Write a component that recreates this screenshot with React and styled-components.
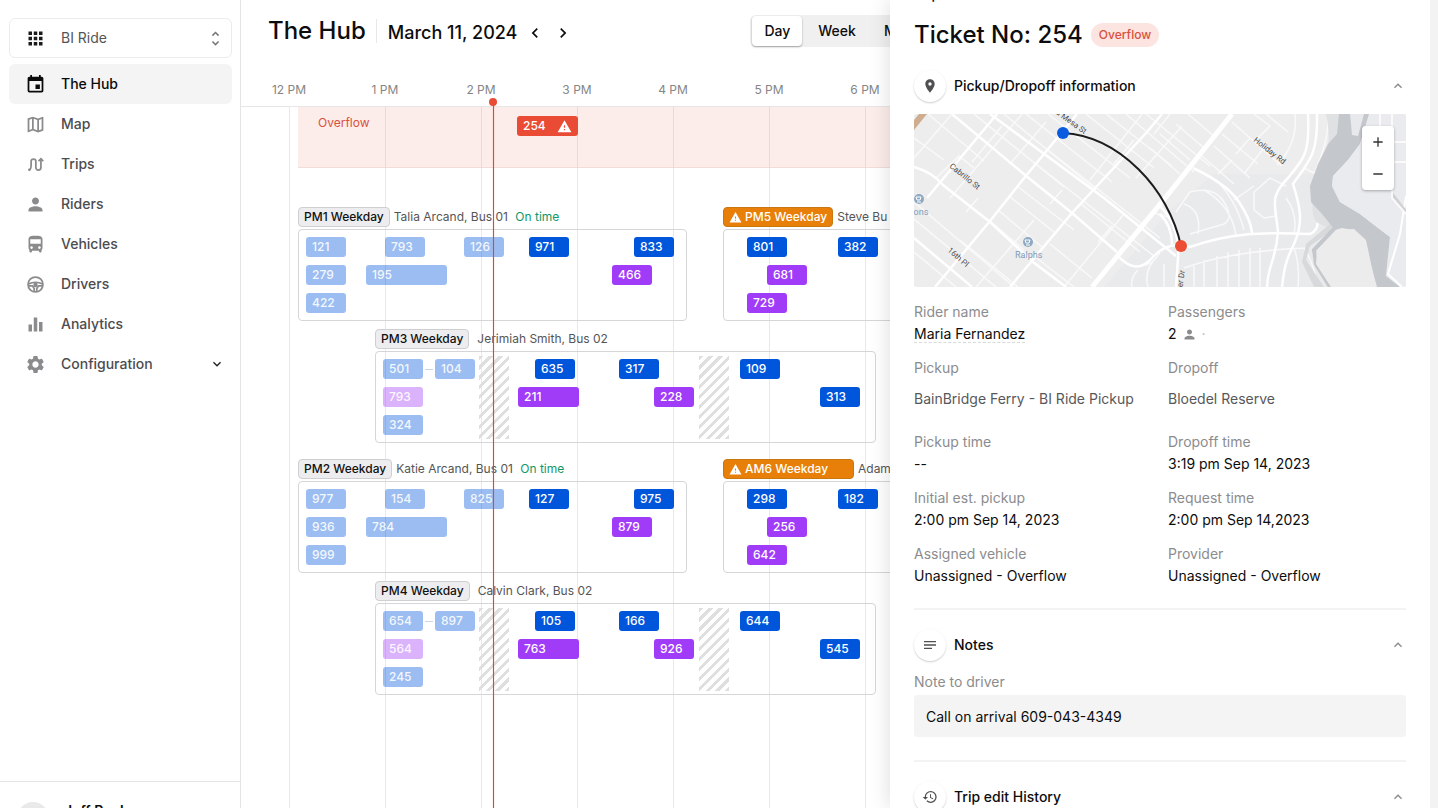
import React from "react";
import styled, { createGlobalStyle, css } from "styled-components";
import {
  MdAdd,
  MdApps,
  MdChevronLeft,
  MdChevronRight,
  MdDirectionsBus,
  MdEqualizer,
  MdEvent,
  MdExpandLess,
  MdExpandMore,
  MdHistory,
  MdNotes,
  MdOutlineMap,
  MdPerson,
  MdPlace,
  MdRemove,
  MdSettings,
  MdUnfoldMore,
  MdWarning,
} from "react-icons/md";

const GlobalStyle = createGlobalStyle`
  *, *::before, *::after { box-sizing: border-box; }
  body {
    margin: 0;
    background: #fff;
    color: #0d0d0d;
    font-family: Inter, "Liberation Sans", sans-serif;
    font-size: 14px;
    line-height: 22px;
  }
  button, select, input {
    margin: 0;
    padding: 0;
    border: 0;
    background: none;
    font: inherit;
    color: inherit;
  }
  button { cursor: pointer; }
  a { color: inherit; text-decoration: none; }
  h1, h2, p, dl, dd, dt { margin: 0; font-weight: inherit; font-size: inherit; }
  svg { display: block; flex: none; }
`;

/* ---------- Shell ---------- */

const Shell = styled.div`
  position: relative;
  display: flex;
  height: 100vh;
  overflow: hidden;
`;

const Sidebar = styled.aside`
  flex: none;
  display: flex;
  flex-direction: column;
  width: 241px;
  border-right: 1px solid #e4e4e4;
`;

const SidebarTop = styled.div`
  flex: 1;
  min-height: 0;
  padding: 18px 8px 0 9px;
`;

const Workspace = styled.label`
  display: flex;
  align-items: center;
  gap: 15px;
  height: 40px;
  margin-bottom: 6px;
  padding: 0 6px 0 15px;
  border: 1px solid #ececee;
  border-radius: 6px;
  color: #1a1a1a;
`;

const WorkspaceSelect = styled.select`
  flex: 1;
  min-width: 0;
  appearance: none;
  outline: 0;
  color: #555;
`;

const NavLink = styled.a`
  display: flex;
  align-items: center;
  gap: 15px;
  height: 40px;
  padding: 0 7px 0 16px;
  border-radius: 6px;
  font-weight: 500;
  color: ${(p) => (p.$active ? "#0a0a0a" : "#4c4c4f")};
  background: ${(p) => (p.$active ? "#f4f4f5" : "transparent")};
  svg { color: ${(p) => (p.$active ? "#0a0a0a" : "#8b8b8d")}; }
`;

const NavText = styled.span`
  flex: 1;
`;

const Disclosure = styled.span`
  svg { color: #222; }
`;

const Account = styled.div`
  flex: none;
  display: flex;
  gap: 15px;
  height: 70px;
  margin-bottom: -43px;
  padding: 18px 17px 0;
  border-top: 1px solid #e4e4e4;
  font-weight: 600;
`;

const Avatar = styled.span`
  width: 32px;
  height: 32px;
  margin-top: 2px;
  border-radius: 50%;
  background: #e9e9ea;
`;

/* ---------- Hub header ---------- */

const Main = styled.main`
  flex: 1;
  min-width: 0;
  display: flex;
  flex-direction: column;
  overflow: hidden;
`;

const HubHeader = styled.header`
  flex: none;
  display: flex;
  align-items: center;
  height: 62px;
  padding-left: 27px;
  white-space: nowrap;
`;

const HubTitle = styled.h1`
  font-size: 24px;
  line-height: 32px;
  font-weight: 500;
`;

const DateNav = styled.div`
  display: flex;
  align-items: center;
  height: 24px;
  margin-left: 10px;
  padding: 4px 0 0 11px;
  border-left: 1px solid #e8e8e8;
  font-size: 18px;
  font-weight: 500;
`;

const ArrowButton = styled.button`
  display: grid;
  place-items: center;
  width: 28px;
  height: 24px;
  &:first-of-type { margin-left: 4px; }
`;

const RangeSwitch = styled.div`
  display: flex;
  flex: none;
  height: 32px;
  margin-left: 173px;
  padding: 1px 2px;
  border-radius: 6px;
  background: #f0f0f0;
`;

const RangeButton = styled.button`
  padding: 0 12px 0 16px;
  border-radius: 4px;
  font-weight: 500;
  ${(p) =>
    p.$on &&
    css`
      padding: 0 12px;
      background: #fff;
      box-shadow: 0 1px 2px rgba(0, 0, 0, 0.35);
    `}
`;

/* ---------- Timeline ---------- */

const HOUR = 96;

const Hours = styled.div`
  flex: none;
  display: flex;
  height: 45px;
  padding-top: 17px;
  border-bottom: 1px solid #e6e6e6;
  font-size: 12px;
  color: #858585;
`;

const Hour = styled.span`
  flex: none;
  width: ${HOUR}px;
  text-align: center;
`;

const Board = styled.div`
  position: relative;
  flex: 1;
  margin-left: 48px;
  background: repeating-linear-gradient(90deg, #e9e9ea 0 1px, transparent 1px ${HOUR}px);
`;

const NowLine = styled.div`
  position: absolute;
  top: -5px;
  bottom: 0;
  width: 1px;
  background: #dc4a2c;
  box-shadow: 0 0 1px #e8735c;
  &::before {
    content: "";
    position: absolute;
    left: -4px;
    top: -4px;
    width: 8px;
    height: 8px;
    border-radius: 50%;
    background: #e94b35;
  }
`;

const OverflowBand = styled.div`
  display: flex;
  height: 61px;
  margin: 0 0 39px 9px;
  padding-top: 9px;
  background: rgba(234, 75, 53, 0.1);
  border-bottom: 1px solid #f2dcd8;
`;

const OverflowLabel = styled.span`
  flex: none;
  width: 219px;
  padding-left: 20px;
  font-size: 12px;
  line-height: 14px;
  color: #d9503d;
`;

const ShiftRow = styled.div`
  display: flex;
  margin-bottom: ${(p) => (p.$last ? 16 : 8)}px;
`;

const ShiftBlock = styled.section`
  flex: none;
  display: flex;
  flex-direction: column;
  gap: 2px;
`;

const ShiftHead = styled.header`
  display: flex;
  align-items: center;
  gap: ${(p) => p.$gap}px;
  height: 20px;
  font-size: 12px;
  white-space: nowrap;
  color: #555;
`;

const ShiftTag = styled.h2`
  display: flex;
  align-items: center;
  gap: 3px;
  height: 20px;
  min-width: ${(p) => (p.$wide ? 131 : 0)}px;
  padding: 0 5px;
  border: 1px solid ${(p) => (p.$warn ? "#c9780f" : "#cfcfd2")};
  border-radius: 4px;
  font-weight: 500;
  color: ${(p) => (p.$warn ? "#fff" : "#111")};
  background: ${(p) => (p.$warn ? "#e77f08" : "#ededef")};
`;

const OnTime = styled.span`
  margin-left: 4px;
  color: #109868;
`;

const ShiftBox = styled.div`
  position: relative;
  display: flex;
  flex-direction: column;
  gap: 8px;
  padding: 7px 0;
  border: 1px solid #d6d6d8;
  border-radius: 4px;
`;

const Lane = styled.div`
  display: flex;
  align-items: center;
  height: 20px;
`;

const chipColors = {
  done: ["rgba(0, 86, 219, 0.39)", "rgba(255, 255, 255, 0.9)"],
  next: ["#0056db", "#fff"],
  return: ["#a03cf8", "#fff"],
  returnDone: ["rgba(160, 60, 248, 0.39)", "rgba(255, 255, 255, 0.9)"],
  overflow: ["#e94b35", "#fff"],
};

const Chip = styled.button`
  flex: none;
  display: flex;
  align-items: center;
  justify-content: space-between;
  height: 20px;
  padding: 0 6px;
  border-radius: 3px;
  font-size: 12px;
  line-height: 20px;
  font-weight: 500;
  background: ${(p) => chipColors[p.$kind][0]};
  color: ${(p) => chipColors[p.$kind][1]};
`;

const Connector = styled.span`
  flex: none;
  height: 1px;
  background: #c9d6ea;
`;

const Break = styled.div`
  position: absolute;
  top: 4px;
  bottom: 3px;
  background: repeating-linear-gradient(135deg, #dfdfe0 0 3px, transparent 3px 7px);
`;

/* ---------- Ticket drawer ---------- */

const Drawer = styled.aside`
  position: absolute;
  top: 0;
  right: 0;
  bottom: 0;
  width: 548px;
  padding: 0 24px;
  overflow: hidden;
  background: #fff;
  border-right: 8px solid #f3f3f3;
  box-shadow: 0 0 20px rgba(0, 0, 0, 0.14);
`;

const BackLink = styled.a`
  display: block;
  margin-top: -14px;
  line-height: 16px;
  font-weight: 500;
`;

const TicketHead = styled.header`
  display: flex;
  align-items: center;
  gap: 8px;
  height: 32px;
  margin: 17px 0 19px;
`;

const TicketTitle = styled.h2`
  font-size: 24px;
  line-height: 32px;
  font-weight: 500;
`;

const Pill = styled.span`
  padding: 0 8px;
  border-radius: 12px;
  font-size: 12px;
  line-height: 24px;
  font-weight: 500;
  color: #d9503d;
  background: #fce4e1;
`;

const SectionToggle = styled.button`
  display: flex;
  align-items: center;
  gap: 8px;
  width: 100%;
  height: 32px;
  text-align: left;
  font-weight: 500;
  svg { color: #8b8b8d; }
`;

const SectionIcon = styled.span`
  display: grid;
  place-items: center;
  width: 32px;
  height: 32px;
  border-radius: 50%;
  box-shadow: 0 1px 2px rgba(0, 0, 0, 0.2);
  svg { color: #505052; }
`;

const SectionTitle = styled.span`
  flex: 1;
`;

const MapFrame = styled.div`
  position: relative;
  height: 173px;
  margin: 12px 0 14px;
  overflow: hidden;
  border-radius: 3px;
  background: #ededee;
  svg.streets { width: 100%; height: 100%; }
`;

const ZoomControl = styled.div`
  position: absolute;
  top: 12px;
  right: 12px;
  display: grid;
  border-radius: 4px;
  background: #fff;
  box-shadow: 0 1px 3px rgba(0, 0, 0, 0.3);
`;

const ZoomButton = styled.button`
  display: grid;
  place-items: center;
  width: 32px;
  height: 32px;
  color: #333;
`;

const Details = styled.dl`
  display: grid;
  grid-template-columns: 254px 1fr;
  row-gap: 12px;
  margin-bottom: 21px;
`;

const Term = styled.dt`
  color: #8c8c8e;
`;

const Value = styled.dd`
  display: flex;
  align-items: center;
  gap: 5px;
  height: ${(p) => (p.$tall ? 40 : 22)}px;
  color: ${(p) => (p.$tall ? "#58585a" : "#0d0d0d")};
  svg { color: #8b8b8d; }
`;

const RiderLink = styled.a`
  line-height: 17px;
  border-bottom: 1px dashed #dadada;
`;

const Dot = styled.span`
  color: #b5b5b7;
`;

const Divider = styled.hr`
  height: 2px;
  margin: 0 0 19px;
  border: 0;
  background: #f3f3f3;
`;

const NoteField = styled.label`
  display: grid;
  gap: 2px;
  margin: 10px 0 23px;
  color: #8c8c8e;
`;

const NoteInput = styled.input`
  width: 100%;
  height: 42px;
  padding: 0 12px;
  border-radius: 4px;
  outline: 0;
  color: #0d0d0d;
  background: #f4f4f4;
`;

/* ---------- Drawings ---------- */

function TripsIcon({ size }) {
  return (
    <svg width={size} height={size} viewBox="0 0 24 24" fill="none" stroke="currentColor" strokeWidth="2">
      <path d="M4.500 18C7 18 7 15 7 12.500V8.500a2.700 2.700 0 0 1 5.400 0V15.500a2.900 2.900 0 0 0 5.800 0V6" />
      <path d="M15.500 8.200l2.700-2.700 2.700 2.700" />
      <circle cx="5" cy="18" r="1.500" fill="currentColor" stroke="none" />
    </svg>
  );
}

function WheelIcon({ size }) {
  return (
    <svg width={size} height={size} viewBox="0 0 24 24" fill="none" stroke="currentColor" strokeWidth="2">
      <circle cx="12" cy="12" r="8.500" />
      <path d="M4 11.300C9 9.200 15 9.200 20 11.300" />
      <path d="M4 13.500h4.500l2 3V20M20 13.500h-4.500l-2 3V20" />
      <circle cx="12" cy="12.500" r="1.500" fill="currentColor" />
    </svg>
  );
}

function StreetMap() {
  return (
    <svg className="streets" viewBox="0 0 492 173" preserveAspectRatio="xMidYMid slice" role="img" aria-label="Route map">
      <rect width="492" height="173" fill="#ededee" />
      <path d="M190 173L256 96 300 60 420 60V173Z" fill="#e9eaec" />
      <path d="M0 6L5 0H13L0 16Z" fill="#cfae90" />
      <g fill="none" stroke="#f9f9fa" strokeWidth="1.500">
        <path d="M0 88L80 156 100 173M0 105L82 173M0 138L42 173M0 24L30 46M14 0L70 47M22 64L45 42 60 54M60 0L150 73M90 0L182 76M112 0L198 68M134 0L216 64M172 0L240 54M192 0L258 52M212 0L280 58M232 0L296 52" />
        <path d="M95 82L140 118M84 96L128 133M76 107L110 136M103 72L160 116M122 50L240 142M134 36L246 124M166 89L226 138M62 173L120 106M136 130L178 164M120 142L160 173M46 126L104 173" />
        <path d="M0 44L38 0M36 84L108 0M52 98L64 84M150 173L210 100M222 64L268 12M176 66L228 0M256 0L240 20M200 50L220 26M184 128L198 112M136 90L148 76M58 48L88 12M96 50L132 8" />
        <path d="M236 34L266 60M246 20L276 46M262 10L290 34M274 0L302 24M318 8L368 52M308 20L344 50M300 32L336 64M288 42L320 70M330 60L350 34 336 24 322 40M340 0L356 12 344 24M352 0L374 18M318 46L304 60" />
        <path d="M262 98L276 78Q300 72 310 88T310 110L276 120M270 90Q288 96 284 120M290 76Q318 92 322 122M302 66Q322 86 330 116M340 78L356 64 372 72M340 78V96L350 104 362 102M320 86L340 72" />
        <path d="M303 142V173M314 138V173M325 136V173M336 134V173M346 134V173M280 150V173M290 146V173M270 154Q320 136 396 134M380 134Q386 150 384 173M390 134Q400 150 404 173M372 84Q384 100 380 120M381 0Q384 30 363 51M414 0Q416 24 400 60M390 54L402 60" />
        <path d="M204 142Q216 154 228 152T246 138M224 156Q216 164 218 173M240 146Q230 158 234 173M250 150V173M258 104L236 98" />
      </g>
      <g fill="none" stroke="#fff" strokeWidth="2.500">
        <path d="M21 173L76 107 111 63 163 0M96 173L158 99 233 18 248 0M13 84L83 0" />
        <path d="M0 53Q18 58 29 71L76 108 119 148 152 173M38 0L111 61 158 99 203 138M76 0L190 84 262 142M0 124L58 173" />
        <path d="M204 142Q222 162 238 144T276 133C316 119 346 118 396 120Q406 116 403 102" />
        <path d="M394 0C396 40 390 44 374 64 354 84 362 92 364 118 362 146 354 150 353 173" />
        <path d="M403 0C404 40 396 46 379 70 386 92 390 108 380 130 370 150 370 158 368 173" />
        <path d="M279 54Q313 70 325 88T338 119M246 92Q266 112 264 144L262 173M246 100Q258 112 258 130" />
      </g>
      <path d="M178 173L256 78 318 0" fill="none" stroke="#fff" strokeWidth="5" />
      <path d="M412 0Q420 34 404 62 394 96 402 108L410 112 424 118 414 92V58L430 26V0Z" fill="#e0e1e3" />
      <path d="M424 112L396 132 392 146 410 173H400L388 148 392 130 416 110Z" fill="#d7d9db" />
      <path d="M425 0H455L446 30 434 46 419 62 418 72 426 88 446 100 464 114 476 123 474 142 472 162 486 173H463L456 148 446 125 438 116 428 114 421 116 408 100 397 88 396 72 404 50 414 30 423 20Z" fill="#c4c7cb" />
      <path d="M436 0L438 21 444 22 450 0Z" fill="#e7e9ec" />
      <path d="M446 30L456 0H492V173H486L474 162 476 123 446 100 426 88 418 72 419 62 434 46Z" fill="#e9ebef" />
      <path d="M421 114L400 136 402 150 416 173" fill="none" stroke="#c4c7cb" strokeWidth="4" />
      <path d="M422 116L440 115 452 126 462 173H417L402 150 403 136Z" fill="#ececed" />
      <path d="M492 82L486 120 474 160 488 173" fill="none" stroke="#fff" strokeWidth="2" />
      <path d="M478 80L492 98" fill="none" stroke="#cfd1d4" strokeWidth="3" />
      <path d="M478 0V84L492 100M466 0V12M478 28H492M478 48H492" fill="none" stroke="#fafafa" strokeWidth="2" />
      <g fontFamily="Roboto, sans-serif" fontSize="8" fill="#4a4a4c">
        <text transform="translate(35 53) rotate(39)">Cabrillo St</text>
        <text transform="translate(33 137) rotate(41)">16th Pl</text>
        <text transform="translate(138 -3) rotate(36)">La Mesa St</text>
        <text transform="translate(339 27) rotate(38)">Holiday Rd</text>
        <text transform="translate(267 184) rotate(-82)">River Dr</text>
      </g>
      <g fontFamily="Roboto, sans-serif" fontSize="9" fill="#7f9cb8">
        <text x="101" y="144">Ralphs</text>
        <text x="-6" y="101">Vons</text>
      </g>
      {[[5, 85], [114, 128]].map(([x, y]) => (
        <g key={x} transform={`translate(${x} ${y})`}>
          <circle r="5" fill="#8fa9c2" />
          <path d="M-3 -2H2L1 1H-2ZM-2 3H2" fill="none" stroke="#fff" />
        </g>
      ))}
      <path d="M149 19C205 22 255 75 267 132" fill="none" stroke="#1c1c1c" strokeWidth="2" />
      <circle cx="149" cy="19" r="6" fill="#0a5be0" />
      <circle cx="267" cy="132" r="6" fill="#ec4d34" />
    </svg>
  );
}

/* ---------- Data: positions are pixels on the time axis, 96 per hour from 12 PM ---------- */

const navItems = [
  { label: "The Hub", icon: MdEvent, active: true },
  { label: "Map", icon: MdOutlineMap },
  { label: "Trips", icon: TripsIcon },
  { label: "Riders", icon: MdPerson },
  { label: "Vehicles", icon: MdDirectionsBus },
  { label: "Drivers", icon: WheelIcon },
  { label: "Analytics", icon: MdEqualizer },
  { label: "Configuration", icon: MdSettings, expandable: true },
];

const hours = ["12 PM", "1 PM", "2 PM", "3 PM", "4 PM", "5 PM", "6 PM"];

const trip = (id, start, kind = "next", length = 40) => ({ id, start, kind, length });

const weekday = (name, driver, ids) => ({
  name,
  driver,
  onTime: true,
  gap: 4,
  start: 9,
  length: 389,
  lanes: [
    [trip(ids[0], 17, "done"), trip(ids[1], 96, "done"), trip(ids[2], 175, "done"), trip(ids[3], 240), trip(ids[4], 345)],
    [trip(ids[5], 17, "done"), trip(ids[6], 77, "done", 81), trip(ids[7], 323, "return")],
    [trip(ids[8], 17, "done")],
  ],
});

const delayed = (name, driver, ids, wide) => ({
  name,
  driver,
  wide,
  warn: true,
  gap: 4,
  start: 434,
  length: 389,
  lanes: [
    [trip(ids[0], 458), trip(ids[1], 549)],
    [trip(ids[2], 478, "return")],
    [trip(ids[3], 458, "return")],
  ],
});

const withBreaks = (name, driver, ids) => ({
  name,
  driver,
  gap: 8,
  start: 86,
  length: 501,
  breaks: [{ start: 190, length: 30 }, { start: 410, length: 30 }],
  lanes: [
    [
      trip(ids[0], 94, "done"),
      { link: true, start: 136, length: 8 },
      trip(ids[1], 146, "done"),
      trip(ids[2], 246),
      trip(ids[3], 330),
      trip(ids[4], 451),
    ],
    [trip(ids[5], 94, "returnDone"), trip(ids[6], 229, "return", 61), trip(ids[7], 365, "return"), trip(ids[8], 531)],
    [trip(ids[9], 94, "done")],
  ],
});

const shiftRows = [
  [
    weekday("PM1 Weekday", "Talia Arcand, Bus 01", [121, 793, 126, 971, 833, 279, 195, 466, 422]),
    delayed("PM5 Weekday", "Steve Bu", [801, 382, 681, 729]),
  ],
  [withBreaks("PM3 Weekday", "Jerimiah Smith, Bus 02", [501, 104, 635, 317, 109, 793, 211, 228, 313, 324])],
  [
    weekday("PM2 Weekday", "Katie Arcand, Bus 01", [977, 154, 825, 127, 975, 936, 784, 879, 999]),
    delayed("AM6 Weekday", "Adam", [298, 182, 256, 642], true),
  ],
  [withBreaks("PM4 Weekday", "Calvin Clark, Bus 02", [654, 897, 105, 166, 644, 564, 763, 926, 545, 245])],
];

const details = [
  { label: "Rider name", value: <RiderLink href="#rider">Maria Fernandez</RiderLink> },
  { label: "Passengers", value: <>2 <MdPerson size={15} /> <Dot>·</Dot></> },
  { label: "Pickup", value: "BainBridge Ferry - BI Ride Pickup", tall: true },
  { label: "Dropoff", value: "Bloedel Reserve", tall: true },
  { label: "Pickup time", value: "--" },
  { label: "Dropoff time", value: "3:19 pm Sep 14, 2023" },
  { label: "Initial est. pickup", value: "2:00 pm Sep 14, 2023" },
  { label: "Request time", value: "2:00 pm Sep 14,2023" },
  { label: "Assigned vehicle", value: "Unassigned - Overflow" },
  { label: "Provider", value: "Unassigned - Overflow" },
];

/* ---------- Composition ---------- */

/* Each item's left margin is its distance from the end of the one before it. */
function spaced(items, origin) {
  let end = origin;
  return items.map((item) => {
    const style = { marginLeft: item.start - end, width: item.length };
    end = item.start + item.length;
    return { item, style };
  });
}

function Shift({ shift, style }) {
  const inner = shift.start + 1;
  return (
    <ShiftBlock style={style}>
      <ShiftHead $gap={shift.gap}>
        <ShiftTag $warn={shift.warn} $wide={shift.wide}>
          {shift.warn && <MdWarning size={13} />}
          {shift.name}
        </ShiftTag>
        <span>
          {shift.driver} {shift.onTime && <OnTime>On time</OnTime>}
        </span>
      </ShiftHead>
      <ShiftBox>
        {(shift.breaks || []).map((b) => (
          <Break key={b.start} style={{ left: b.start - inner, width: b.length }} />
        ))}
        {shift.lanes.map((lane, i) => (
          <Lane key={i}>
            {spaced(lane, inner).map(({ item, style: place }) =>
              item.link ? (
                <Connector key="link" style={place} />
              ) : (
                <Chip key={item.id} $kind={item.kind} style={place}>
                  {item.id}
                </Chip>
              )
            )}
          </Lane>
        ))}
      </ShiftBox>
    </ShiftBlock>
  );
}

function SectionHeader({ icon: Icon, title }) {
  return (
    <SectionToggle aria-expanded="true">
      <SectionIcon>
        <Icon size={16} />
      </SectionIcon>
      <SectionTitle>{title}</SectionTitle>
      <MdExpandLess size={16} />
    </SectionToggle>
  );
}

export default function App() {
  return (
    <Shell>
      <GlobalStyle />
      <Sidebar>
        <SidebarTop>
          <Workspace>
            <MdApps size={21} />
            <WorkspaceSelect aria-label="Workspace">
              <option>BI Ride</option>
            </WorkspaceSelect>
            <MdUnfoldMore size={19} color="#777" />
          </Workspace>
          <nav>
            {navItems.map(({ label, icon: Icon, active, expandable }) => (
              <NavLink key={label} href={`#${label}`} $active={active}>
                <Icon size={21} />
                <NavText>{label}</NavText>
                {expandable && (
                  <Disclosure>
                    <MdExpandMore size={16} />
                  </Disclosure>
                )}
              </NavLink>
            ))}
          </nav>
        </SidebarTop>
        <Account>
          <Avatar />
          <span>Jeff Rucker</span>
        </Account>
      </Sidebar>

      <Main>
        <HubHeader>
          <HubTitle>The Hub</HubTitle>
          <DateNav>
            March 11, 2024
            <ArrowButton aria-label="Previous day">
              <MdChevronLeft size={20} />
            </ArrowButton>
            <ArrowButton aria-label="Next day">
              <MdChevronRight size={20} />
            </ArrowButton>
          </DateNav>
          <RangeSwitch>
            <RangeButton $on>Day</RangeButton>
            <RangeButton>Week</RangeButton>
            <RangeButton>Month</RangeButton>
          </RangeSwitch>
        </HubHeader>
        <Hours>
          {hours.map((h) => (
            <Hour key={h}>{h}</Hour>
          ))}
        </Hours>
        <Board>
          <OverflowBand>
            <OverflowLabel>Overflow</OverflowLabel>
            <Chip $kind="overflow" style={{ width: 61 }}>
              254 <MdWarning size={15} />
            </Chip>
          </OverflowBand>
          {shiftRows.map((row, i) => (
            <ShiftRow key={i} $last={i % 2 === 1}>
              {spaced(row, 0).map(({ item, style }) => (
                <Shift key={item.name} shift={item} style={style} />
              ))}
            </ShiftRow>
          ))}
          <NowLine style={{ left: 204 }} />
        </Board>
      </Main>

      <Drawer>
        <BackLink href="#trips">Trips</BackLink>
        <TicketHead>
          <TicketTitle>Ticket No: 254</TicketTitle>
          <Pill>Overflow</Pill>
        </TicketHead>
        <SectionHeader icon={MdPlace} title="Pickup/Dropoff information" />
        <MapFrame>
          <StreetMap />
          <ZoomControl>
            <ZoomButton aria-label="Zoom in">
              <MdAdd size={16} />
            </ZoomButton>
            <ZoomButton aria-label="Zoom out">
              <MdRemove size={16} />
            </ZoomButton>
          </ZoomControl>
        </MapFrame>
        <Details>
          {details.map((d) => (
            <div key={d.label}>
              <Term>{d.label}</Term>
              <Value $tall={d.tall}>{d.value}</Value>
            </div>
          ))}
        </Details>
        <Divider />
        <SectionHeader icon={MdNotes} title="Notes" />
        <NoteField>
          Note to driver
          <NoteInput defaultValue="Call on arrival 609-043-4349" />
        </NoteField>
        <Divider />
        <SectionHeader icon={MdHistory} title="Trip edit History" />
      </Drawer>
    </Shell>
  );
}
